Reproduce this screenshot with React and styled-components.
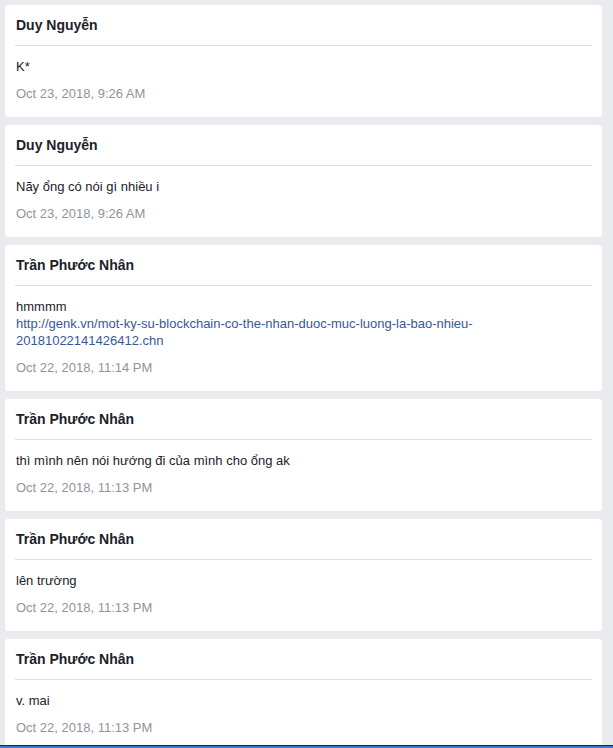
import styled, { createGlobalStyle } from "styled-components";

const GlobalStyle = createGlobalStyle`
  html, body {
    margin: 0;
    padding: 0;
    background: #e9ebee;
    font-family: "Liberation Sans", Arial, sans-serif;
  }
`;

const messages = [
  { name: "Duy Nguyễn", lines: ["K*"], time: "Oct 23, 2018, 9:26 AM" },
  { name: "Duy Nguyễn", lines: ["Nãy ổng có nói gì nhiều i"], time: "Oct 23, 2018, 9:26 AM" },
  {
    name: "Trần Phước Nhân",
    lines: ["hmmmm"],
    link: "http://genk.vn/mot-ky-su-blockchain-co-the-nhan-duoc-muc-luong-la-bao-nhieu-20181022141426412.chn",
    time: "Oct 22, 2018, 11:14 PM",
  },
  { name: "Trần Phước Nhân", lines: ["thì mình nên nói hướng đi của mình cho ổng ak"], time: "Oct 22, 2018, 11:13 PM" },
  { name: "Trần Phước Nhân", lines: ["lên trường"], time: "Oct 22, 2018, 11:13 PM" },
  { name: "Trần Phước Nhân", lines: ["v. mai"], time: "Oct 22, 2018, 11:13 PM" },
];

const StyledFeed = styled.main`
  display: flex;
  flex-direction: column;
  gap: 8px;
  padding: 5px 11px 20px 5px;
`;

const StyledCard = styled.article`
  background: #ffffff;
  border-radius: 3px;
  padding: 10px 10px 14px;
`;

const StyledName = styled.h4`
  margin: 0;
  padding: 1px 0 11px 1px;
  border-bottom: 1px solid #dddfe2;
  font-size: 14px;
  font-weight: 700;
  line-height: 18px;
  color: #1d2129;
`;

const StyledBody = styled.div`
  margin-top: 12px;
  padding-left: 1px;
  font-size: 13px;
  line-height: 17px;
  color: #1d2129;
  overflow-wrap: break-word;
`;

const StyledLink = styled.a`
  color: #365899;
  text-decoration: none;
`;

const StyledTime = styled.div`
  margin-top: 10px;
  padding-left: 1px;
  font-size: 13px;
  line-height: 18px;
  color: #90949c;
`;

const StyledBottomBar = styled.div`
  position: fixed;
  left: 0;
  right: 0;
  bottom: 0;
  height: 2px;
  background: #3b79c9;
  border-top: 1px solid #1c2a3f;
`;

const Message = ({ name, lines, link, time }) => (
  <StyledCard>
    <StyledName>{name}</StyledName>
    <StyledBody>
      {lines.map((l) => (
        <div key={l}>{l}</div>
      ))}
      {link && <StyledLink href={link}>{link}</StyledLink>}
    </StyledBody>
    <StyledTime>{time}</StyledTime>
  </StyledCard>
);

export default function App() {
  return (
    <>
      <GlobalStyle />
      <StyledFeed>
        {messages.map((m, i) => (
          <Message key={i} {...m} />
        ))}
      </StyledFeed>
      <StyledBottomBar />
    </>
  );
}
